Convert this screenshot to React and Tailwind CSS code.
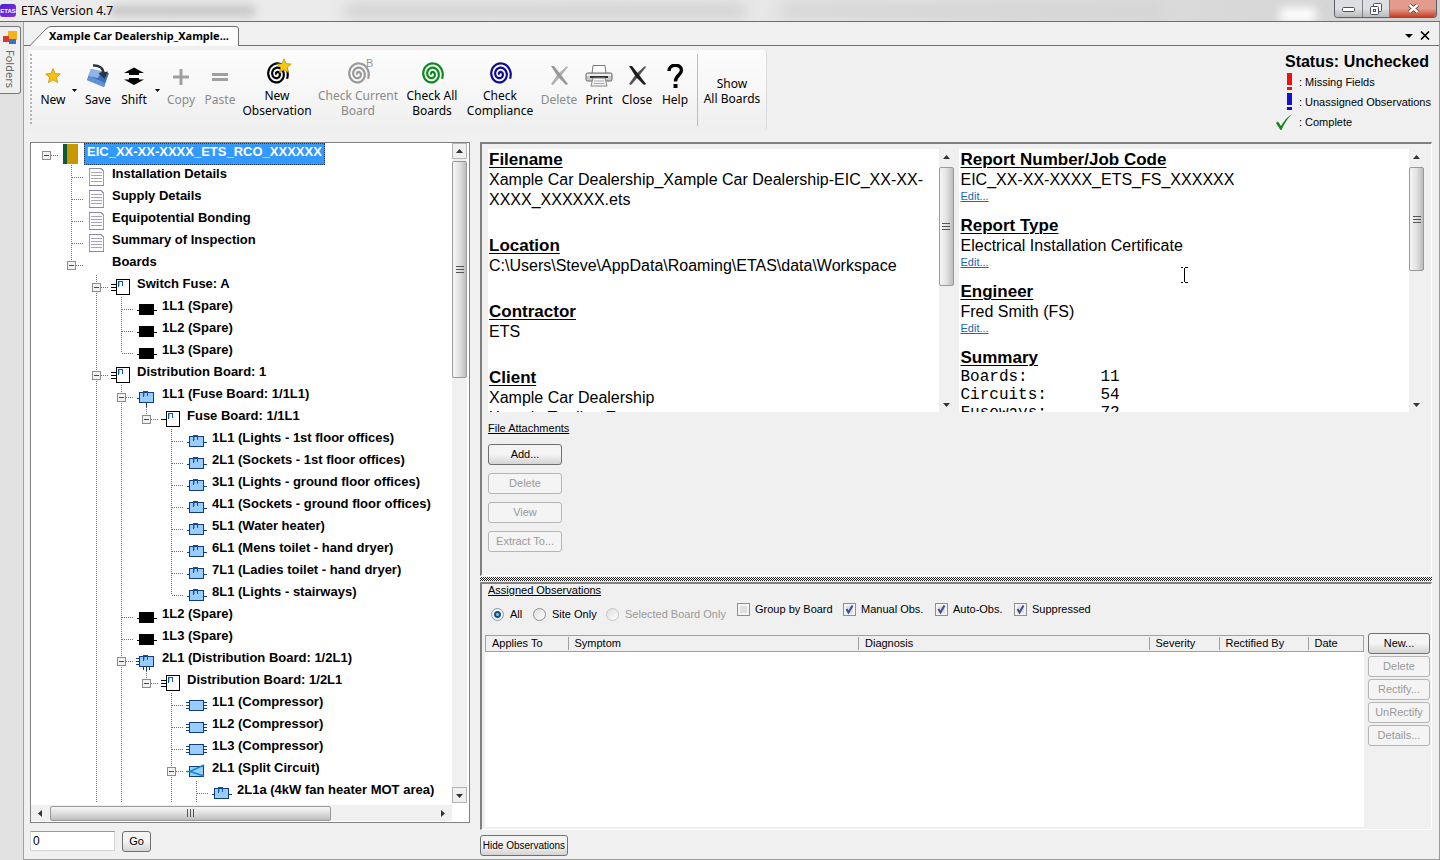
import React, { useState } from 'react';
import clsx from 'clsx';

const circuits = [
  '1L1 (Lights - 1st floor offices)',
  '2L1 (Sockets - 1st floor offices)',
  '3L1 (Lights - ground floor offices)',
  '4L1 (Sockets - ground floor offices)',
  '5L1 (Water heater)',
  '6L1 (Mens toilet - hand dryer)',
  '7L1 (Ladies toilet - hand dryer)',
  '8L1 (Lights - stairways)',
];

// "more" marks a node whose next sibling is further down than the view
const tree = {
  label: 'EIC_XX-XX-XXXX_ETS_RCO_XXXXXX',
  icon: 'book',
  children: [
    { label: 'Installation Details', icon: 'doc' },
    { label: 'Supply Details', icon: 'doc' },
    { label: 'Equipotential Bonding', icon: 'doc' },
    { label: 'Summary of Inspection', icon: 'doc' },
    {
      label: 'Boards',
      children: [
        {
          label: 'Switch Fuse: A',
          icon: 'board3',
          children: [
            { label: '1L1 (Spare)', icon: 'spare' },
            { label: '1L2 (Spare)', icon: 'spare' },
            { label: '1L3 (Spare)', icon: 'spare' },
          ],
        },
        {
          label: 'Distribution Board: 1',
          icon: 'board3',
          more: true,
          children: [
            {
              label: '1L1 (Fuse Board: 1/1L1)',
              icon: 'feed1',
              children: [
                {
                  label: 'Fuse Board: 1/1L1',
                  icon: 'board1',
                  children: circuits.map((label) => ({ label, icon: 'circuit' })),
                },
              ],
            },
            { label: '1L2 (Spare)', icon: 'spare' },
            { label: '1L3 (Spare)', icon: 'spare' },
            {
              label: '2L1 (Distribution Board: 1/2L1)',
              icon: 'feed3',
              more: true,
              children: [
                {
                  label: 'Distribution Board: 1/2L1',
                  icon: 'board3',
                  children: [
                    { label: '1L1 (Compressor)', icon: 'circuit3' },
                    { label: '1L2 (Compressor)', icon: 'circuit3' },
                    { label: '1L3 (Compressor)', icon: 'circuit3' },
                    {
                      label: '2L1 (Split Circuit)',
                      icon: 'split',
                      more: true,
                      children: [{ label: '2L1a (4kW fan heater MOT area)', icon: 'circuit', more: true }],
                    },
                  ],
                },
              ],
            },
          ],
        },
      ],
    },
  ],
};

function flatten(node, level = 0, guides = [], last = true) {
  const open = !last || !!node.more;
  const row = { ...node, level, guides, open };
  const next = level === 0 ? [] : [...guides, open];
  const kids = node.children || [];
  return [row, ...kids.flatMap((kid, i) => flatten(kid, level + 1, next, i === kids.length - 1))];
}

const rows = flatten(tree);

function spiral() {
  const end = Math.PI * 6 + 0.5;
  const points = [];
  for (let t = 2; t <= end; t += 0.15) {
    const r = 12 - ((end - t) / (Math.PI * 2)) * 4.3;
    if (r < 0.5) continue;
    points.push(`${(14 + r * Math.cos(t) * 0.92).toFixed(1)} ${(14 + r * Math.sin(t)).toFixed(1)}`);
  }
  return 'M' + points.join('L');
}

const SPIRAL = spiral();
const STAR = 'M0 -8L2.3 -2.6L8 -2.2L3.6 1.5L5 7.2L0 4.2L-5 7.2L-3.6 1.5L-8 -2.2L-2.3 -2.6Z';

function Lines({ ys, x1, x2, color = '#000' }) {
  return ys.map((y) => <path key={y} d={`M${x1} ${y + 0.5}H${x2}`} stroke={color} />);
}

function Pi({ x, y }) {
  return (
    <g fill="#0b55a8">
      <rect x={x} y={y} width="5" height="1" />
      <rect x={x} y={y} width="1" height="6" />
      <rect x={x + 1} y={y} width="1" height="5" opacity=".35" />
      <rect x={x + 4} y={y} width="1" height="5" />
    </g>
  );
}

function NodeIcon({ type }) {
  const navy = '#123c7c';
  return (
    <svg width="25" height="22" className="shrink-0" shapeRendering="crispEdges" aria-hidden="true">
      {type === 'book' && (
        <>
          <rect x="4" y="1" width="15" height="20" fill="#c99700" />
          <rect x="4" y="1" width="4" height="20" fill="#0b5a34" />
        </>
      )}
      {type === 'doc' && (
        <>
          <path d="M5.5 3.5H17L19.5 6V20.5H5.5Z" fill="#fdfdff" stroke="#9a9abd" />
          <path d="M5 20.5H20M5 3.5H17" stroke="#8888ac" />
          <Lines ys={[7, 10, 13, 16]} x1={7} x2={18} color="#a5a5b2" />
        </>
      )}
      {(type === 'board3' || type === 'board1') && (
        <>
          <Lines ys={type === 'board3' ? [9, 12, 15] : [12]} x1={2} x2={7} />
          <rect x="7.5" y="4.5" width="13" height="15" fill="#fff" stroke="#000" />
          <Pi x={9} y={6} />
        </>
      )}
      {type === 'spare' && (
        <>
          <Lines ys={[13]} x1={3} x2={23} />
          <rect x="5" y="7" width="15" height="11" fill="#000" />
        </>
      )}
      {['circuit', 'circuit3', 'feed1', 'feed3', 'split'].includes(type) && (
        <>
          {(type === 'circuit3' || type === 'feed3') && <Lines ys={[9, 12, 15]} x1={2} x2={5} color={navy} />}
          {type === 'circuit3' && <Lines ys={[9, 12, 15]} x1={20} x2={23} color={navy} />}
          {(type === 'circuit' || type === 'feed1') && <Lines ys={[13]} x1={3} x2={5} color={navy} />}
          {type === 'circuit' && <Lines ys={[13]} x1={20} x2={23} color={navy} />}
          {type === 'feed1' && <path d="M12.5 18V22" stroke={navy} />}
          {type === 'feed3' && <path d="M9.5 18V21M12.5 18V22M15.5 18V21" stroke={navy} />}
          <rect x="5.5" y="7.5" width="14" height="10" fill="#99ccff" stroke={navy} />
          {(type === 'circuit' || type === 'feed1' || type === 'feed3') && <Pi x={9} y={6} />}
          {type === 'split' && (
            <path d="M2 12.5H6L20 6M6 12.5L20 17" stroke="#0d8cc4" strokeWidth="1.5" fill="none" shapeRendering="auto" />
          )}
        </>
      )}
    </svg>
  );
}

function Guide({ up, down, across, box }) {
  return (
    <svg width="25" height="22" className="shrink-0" shapeRendering="crispEdges" aria-hidden="true">
      <g stroke="#707070" strokeDasharray="1 1">
        {up && <path d="M12.5 0V12" />}
        {down && <path d="M12.5 12V22" />}
        {across && <path d="M13 12.5H25" />}
      </g>
      {box && (
        <>
          <rect x="8.5" y="8.5" width="8" height="8" rx="1" fill="#f2f2f2" stroke="#8c8c8c" />
          <path d="M10 12.5H15" stroke="#35478a" />
        </>
      )}
    </svg>
  );
}

function TreeRow({ row }) {
  const [selected] = useState(row.level === 0);
  return (
    <li className="flex h-[22px]">
      {row.level > 0 && <Guide />}
      {row.guides.map((on, i) => (
        <Guide key={i} up={on} down={on} />
      ))}
      <Guide up={row.level > 0} down={row.level > 0 && row.open} across box={!!row.children} />
      <NodeIcon type={row.icon} />
      <span
        className={clsx(
          'whitespace-nowrap px-[3px] pt-px text-[13px] font-bold leading-4',
          selected && 'bg-[#3399ff] text-white outline-1 -outline-offset-1 outline-dotted outline-[#1a3c66]'
        )}
      >
        {row.label}
      </span>
    </li>
  );
}

function Arrow({ dir }) {
  const paths = { up: 'M1 6L4.5 2L8 6Z', down: 'M1 3L4.5 7L8 3Z', left: 'M6 1L2 4.5L6 8Z', right: 'M3 1L7 4.5L3 8Z' };
  return (
    <svg width="9" height="9" aria-hidden="true">
      <path d={paths[dir]} fill="#333" />
    </svg>
  );
}

function VScroll({ thumb, boxed }) {
  const end = clsx('flex h-4 w-full shrink-0 items-center justify-center', boxed && 'border border-[#b4b4b4] bg-[#efefef]');
  return (
    <div className="flex w-[15px] shrink-0 flex-col bg-[#f0f0f0]">
      <div className={end}><Arrow dir="up" /></div>
      <div className={clsx('mt-[2px] flex flex-col items-center justify-center gap-[2px] rounded-xs border border-[#999] bg-linear-to-r from-[#f6f6f6] via-[#e2e2e2] to-[#bcbcbc]', thumb)}>
        <span className="h-px w-2 bg-[#555]" />
        <span className="h-px w-2 bg-[#555]" />
        <span className="h-px w-2 bg-[#555]" />
      </div>
      <div className={clsx(end, 'mt-auto')}><Arrow dir="down" /></div>
    </div>
  );
}

function HScroll() {
  return (
    <div className="mt-[2px] mr-[17px] mb-px flex h-4 shrink-0 items-center bg-[#f0f0f0]">
      <div className="flex w-[19px] justify-center"><Arrow dir="left" /></div>
      <div className="flex h-[15px] w-[281px] items-center justify-center gap-[2px] rounded-xs border border-[#999] bg-linear-to-b from-[#f6f6f6] via-[#dedede] to-[#bcbcbc]">
        <span className="h-2 w-px bg-[#555]" />
        <span className="h-2 w-px bg-[#555]" />
        <span className="h-2 w-px bg-[#555]" />
      </div>
      <div className="ml-auto flex w-[19px] justify-center"><Arrow dir="right" /></div>
    </div>
  );
}

function Button({ className, small, children, ...props }) {
  return (
    <button
      className={clsx(
        'h-[21px] whitespace-nowrap rounded-[3px] border border-[#707070] bg-linear-to-b from-[#f4f4f4] from-50% to-[#d4d4d4] leading-[17px] text-black',
        'disabled:border-[#b5b5b5] disabled:from-[#f4f4f4] disabled:to-[#f4f4f4] disabled:text-[#9a9a9a]',
        small ? 'text-[10px]' : 'text-[11px]',
        className
      )}
      {...props}
    >
      {children}
    </button>
  );
}

function Spiral({ color, star, letter }) {
  return (
    <svg width="32" height="28" aria-hidden="true" className="overflow-visible">
      <path d={SPIRAL} transform="translate(2 1)" fill="none" stroke={color} strokeWidth="2.2" />
      {star && <path d={STAR} transform="translate(23 7) scale(.9)" fill="#f7c910" stroke="#b98700" strokeWidth=".8" />}
      {letter && <text x="24" y="8" fontSize="11" fill="#999" fontFamily="Liberation Sans, sans-serif">{letter}</text>}
    </svg>
  );
}

function ToolIcon({ type }) {
  return (
    <svg width="28" height="24" viewBox="0 0 28 24" aria-hidden="true">
      {type === 'new' && <path d={STAR} transform="translate(14 12) scale(.92)" fill="#f5c211" stroke="#c08a00" strokeWidth=".8" />}
      {type === 'save' && (
        <>
          <path d="M7 5L25 9L20 23L3 16Z" fill="#3c72bd" />
          <path d="M7 5L17 7L14 14L4 12Z" fill="#8fb6e8" />
          <path d="M3 16L20 23L21 19L5 12Z" fill="#5f92d6" />
          <path d="M9 1.500C15 1 19 4 19.500 9" fill="none" stroke="#2b3440" strokeWidth="2.600" />
          <path d="M14.500 9L24 7.500L20.500 15Z" fill="#2b3440" />
        </>
      )}
      {type === 'shift' && (
        <>
          <path d="M14 3.500L24 9H19V11H9V9H4Z" />
          <path d="M14 21L24 15.500H19V14H9V15.500H4Z" />
        </>
      )}
      {type === 'copy' && <path d="M14 5V21M6 13H22" stroke="#a0a0a0" strokeWidth="3" />}
      {type === 'paste' && <path d="M6 10.500H22M6 15.500H22" stroke="#a0a0a0" strokeWidth="3" />}
      {(type === 'delete' || type === 'close') && (
        <g fill={type === 'close' ? '#1c1c1c' : '#999'}>
          <path d="M6 2L9 2L15 9.500L23 20L21 21L13 13Z" />
          <path d="M22 2L23 3L16 12L8 21L6 20L13 10Z" opacity=".75" />
        </g>
      )}
      {type === 'print' && (
        <>
          <path d="M8 1.500H20L21 10H7Z" fill="#fff" stroke="#777" />
          <rect x="1" y="9" width="26" height="8" rx="1.500" fill="#c9c9c9" stroke="#666" />
          <rect x="2" y="10" width="24" height="2" fill="#efefef" />
          <rect x="5" y="12" width="18" height="2" fill="#333" />
          <path d="M8 14H20L22 22H6Z" fill="#f5f5f5" stroke="#888" />
          <path d="M9 17H19M8.500 19.500H19.500" stroke="#aaa" />
        </>
      )}
      {type === 'help' && (
        <>
          <path d="M8 7C8 -0.500 20.500 -0.500 20.500 6C20.500 11 14.500 11 14.500 17.500" fill="none" stroke="#000" strokeWidth="3.400" />
          <rect x="12.500" y="20" width="4" height="4" />
        </>
      )}
    </svg>
  );
}

function Tool({ width, icon, lines, tall, disabled }) {
  return (
    <button
      disabled={disabled}
      className={clsx(
        'flex shrink-0 flex-col items-center self-start whitespace-nowrap text-xs leading-[15px] text-black disabled:text-[#8a8a8a]',
        tall ? 'gap-px pt-[9px]' : 'gap-1 pt-[14px]',
        width
      )}
    >
      {icon}
      <span>{lines[0]}{lines[1] && <><br />{lines[1]}</>}</span>
    </button>
  );
}

function DropArrow({ width }) {
  return (
    <button aria-label="More" className={clsx('flex shrink-0 justify-center self-start pt-[39px]', width)}>
      <svg width="5" height="3" aria-hidden="true"><path d="M0 0H5L2.500 3Z" /></svg>
    </button>
  );
}

function Toolbar() {
  return (
    <div className="flex h-[81px] rounded-r-sm border-r border-[#dcdcdc] bg-linear-to-b from-[#fcfcfc] via-[#f7f7f7] to-[#eeeeee] font-['Noto_Sans','Open_Sans',sans-serif]">
      <div className="mt-1 mr-[6px] ml-[2px] h-[72px] w-[2px] bg-[repeating-linear-gradient(to_bottom,#b5b5b5_0_2px,transparent_2px_4px)]" />
      <Tool width="w-[30px]" icon={<ToolIcon type="new" />} lines={['New']} />
      <DropArrow width="w-[12px]" />
      <Tool width="w-[36px]" icon={<ToolIcon type="save" />} lines={['Save']} />
      <Tool width="w-[36px]" icon={<ToolIcon type="shift" />} lines={['Shift']} />
      <DropArrow width="w-[10px]" />
      <Tool width="w-[38px]" icon={<ToolIcon type="copy" />} lines={['Copy']} disabled />
      <Tool width="w-[40px]" icon={<ToolIcon type="paste" />} lines={['Paste']} disabled />
      <Tool width="w-[74px]" tall icon={<Spiral color="#000" star />} lines={['New', 'Observation']} />
      <Tool width="w-[88px]" tall icon={<Spiral color="#999" letter="B" />} lines={['Check Current', 'Board']} disabled />
      <Tool width="w-[60px]" tall icon={<Spiral color="#0a8a1c" />} lines={['Check All', 'Boards']} />
      <Tool width="w-[76px]" tall icon={<Spiral color="#0a0a96" />} lines={['Check', 'Compliance']} />
      <Tool width="w-[42px]" icon={<ToolIcon type="delete" />} lines={['Delete']} disabled />
      <Tool width="w-[38px]" icon={<ToolIcon type="print" />} lines={['Print']} />
      <Tool width="w-[38px]" icon={<ToolIcon type="close" />} lines={['Close']} />
      <Tool width="w-[38px]" icon={<ToolIcon type="help" />} lines={['Help']} />
      <div className="mt-1 ml-[3px] h-[72px] w-px bg-[#bdbdbd]" />
      <button className="w-[68px] text-xs leading-[15px] whitespace-nowrap">Show<br />All Boards</button>
    </div>
  );
}

function Bang({ color }) {
  return (
    <svg width="24" height="18" aria-hidden="true">
      <path d="M12 0H17V12H12ZM12 14H17V17H12Z" fill={color} />
    </svg>
  );
}

function Status() {
  return (
    <div className="ml-auto pt-[2px] pr-2 text-[11px]">
      <h1 className="pr-[2px] text-right text-[16px] leading-5 font-bold">Status: Unchecked</h1>
      <ul>
        <li className="flex h-5 items-center"><Bang color="#f01010" />: Missing Fields</li>
        <li className="flex h-5 items-center"><Bang color="#1010d0" />: Unassigned Observations</li>
        <li className="flex h-5 items-center">
          <svg width="24" height="18" aria-hidden="true">
            <path d="M1 10L3 8.500L6 13C9 8 12 4 17 1C12 6 9 11 6.500 17H5.500Z" fill="#12851f" />
          </svg>
          : Complete
        </li>
      </ul>
    </div>
  );
}

function Heading({ children }) {
  return <h2 className="text-[17px] leading-5 font-bold underline decoration-1 underline-offset-2">{children}</h2>;
}

const fileInfo = [
  ['Filename', ['Xample Car Dealership_Xample Car Dealership-EIC_XX-XX-XXXX_XXXXXX.ets']],
  ['Location', ['C:\\Users\\Steve\\AppData\\Roaming\\ETAS\\data\\Workspace']],
  ['Contractor', ['ETS']],
  ['Client', ['Xample Car Dealership', 'Xample Trading Estate']],
];

const reportInfo = [
  ['Report Number/Job Code', 'EIC_XX-XX-XXXX_ETS_FS_XXXXXX'],
  ['Report Type', 'Electrical Installation Certificate'],
  ['Engineer', 'Fred Smith (FS)'],
];

const summary = [['Boards:', 11], ['Circuits:', 54], ['Fuseways:', 72]];

function Details() {
  return (
    <div className="grid h-[263px] grid-cols-2 gap-[5px] text-[16px] leading-5">
      <div className="flex min-w-0 overflow-hidden">
        <div className="flex min-w-0 flex-1 flex-col gap-[26px] bg-white px-px pt-px">
          {fileInfo.map(([title, lines]) => (
            <section key={title}>
              <Heading>{title}</Heading>
              {lines.map((line) => <p key={line}>{line}</p>)}
            </section>
          ))}
        </div>
        <VScroll thumb="h-[119px]" />
      </div>
      <div className="relative flex min-w-0 overflow-hidden">
        <div className="flex min-w-0 flex-1 flex-col gap-[10px] bg-white px-[2px] pt-px">
          {reportInfo.map(([title, value]) => (
            <section key={title}>
              <Heading>{title}</Heading>
              <p>{value}</p>
              <a href="#edit" className="mb-[3px] block text-[11px] leading-[13px] text-[#1a66b8] underline">Edit...</a>
            </section>
          ))}
          <section>
            <Heading>Summary</Heading>
            <dl className="grid grid-cols-[140px_1fr] font-['Liberation_Mono',monospace] text-[16px] leading-[18px]">
              {summary.map(([name, count]) => (
                <React.Fragment key={name}>
                  <dt>{name}</dt>
                  <dd>{count}</dd>
                </React.Fragment>
              ))}
            </dl>
          </section>
        </div>
        <VScroll thumb="h-[104px]" />
        <svg width="8" height="16" className="absolute top-[118px] left-[221px]" shapeRendering="crispEdges" aria-hidden="true">
          <path d="M0.500 0.500H3M5 0.500H7.500M0.500 15.500H3M5 15.500H7.500M4 1V15" stroke="#000" />
        </svg>
      </div>
    </div>
  );
}

function Radio({ label, width, ...props }) {
  return (
    <label className={clsx('flex items-center gap-[6px] leading-4 whitespace-nowrap has-disabled:text-[#9a9a9a]', width)}>
      <input
        type="radio"
        name="scope"
        className="size-[13px] shrink-0 appearance-none rounded-full border border-[#8e8f8f] bg-linear-to-br from-[#ddd] to-white checked:border-[#8a9aa8] checked:bg-[radial-gradient(circle,#6cc4ea_0_1px,#1b4f80_2px_3px,#f0f4f7_4px)] disabled:border-[#c4c4c4]"
        {...props}
      />
      {label}
    </label>
  );
}

function Check({ label, width, ...props }) {
  return (
    <label className={clsx('flex items-center gap-[5px] leading-4 whitespace-nowrap', width)}>
      <span className="grid shrink-0 place-items-center">
        <input
          type="checkbox"
          className="peer col-start-1 row-start-1 size-[13px] appearance-none border border-[#8e8f8f] bg-[#dfdfe3] shadow-[inset_0_0_0_2px_#f4f4f4]"
          {...props}
        />
        <svg width="11" height="11" className="pointer-events-none col-start-1 row-start-1 hidden peer-checked:block" aria-hidden="true">
          <path d="M2.500 5L4.500 8.500L8.500 1.500" fill="none" stroke="#3c4f94" strokeWidth="2" />
        </svg>
      </span>
      {label}
    </label>
  );
}

function Th({ children, width, first }) {
  return (
    <th className={clsx('p-0 text-left font-normal', width)}>
      <div className={clsx('my-[1px] h-[13px] pl-[6px] leading-[13px]', !first && 'border-l border-[#a0a0a0]')}>{children}</div>
    </th>
  );
}

function Observations() {
  return (
    <section className="flex min-h-0 flex-1 flex-col border-t-2 border-r border-b border-l-2 border-t-[#808080] border-r-white border-b-white border-l-[#808080] pb-[2px] text-[11px]">
      <h2 className="pl-[6px] leading-3 underline">Assigned Observations</h2>
      <div className="flex h-[37px] items-start pl-[9px]">
        <div className="flex pt-[10px]">
          <Radio label="All" width="w-[42px]" defaultChecked />
          <Radio label="Site Only" width="w-[73px]" />
          <Radio label="Selected Board Only" width="w-[131px]" disabled />
        </div>
        <div className="flex pt-[5px]">
          <Check label="Group by Board" width="w-[106px]" />
          <Check label="Manual Obs." width="w-[92px]" defaultChecked />
          <Check label="Auto-Obs." width="w-[79px]" defaultChecked />
          <Check label="Suppressed" defaultChecked />
        </div>
      </div>
      <div className="flex min-h-0 flex-1 gap-1 pl-[3px]">
        <div className="mt-[2px] flex-1 bg-white">
          <table className="w-full table-fixed border-collapse border border-[#a0a0a0] bg-[#f0f0f0]">
            <thead>
              <tr>
                <Th width="w-[82px]" first>Applies To</Th>
                <Th>Symptom</Th>
                <Th>Diagnosis</Th>
                <Th width="w-[70px]">Severity</Th>
                <Th width="w-[89px]">Rectified By</Th>
                <Th width="w-[56px]">Date</Th>
              </tr>
            </thead>
          </table>
        </div>
        <div className="flex w-[63px] flex-col gap-[2px] pr-px">
          <Button>New...</Button>
          <Button disabled>Delete</Button>
          <Button disabled>Rectify...</Button>
          <Button disabled>UnRectify</Button>
          <Button disabled>Details...</Button>
        </div>
      </div>
    </section>
  );
}

function TitleBar() {
  return (
    <header className="relative flex h-[22px] shrink-0 items-center overflow-hidden border-b border-[#6e6e6e] bg-linear-to-r from-[#ececec] via-[#e9e9e9] to-[#d2d2d2] font-['Noto_Sans','Open_Sans',sans-serif] text-xs">
      <div className="absolute top-[6px] left-[110px] h-[10px] w-[145px] bg-[#c2c2c2] blur-[5px]" />
      <div className="absolute top-[4px] left-[345px] h-[14px] w-[400px] bg-[#d0d0d0] blur-[7px]" />
      <div className="absolute top-[4px] left-[780px] h-[14px] w-[380px] bg-[#d2d2d2] blur-[8px]" />
      <div className="absolute top-[8px] left-[1280px] h-[14px] w-[36px] bg-white blur-[5px]" />
      <span className="relative flex h-[13px] w-4 items-center justify-center overflow-hidden rounded-[3px] bg-linear-to-br from-[#4a1fd0] to-[#8a2be2] font-['Liberation_Sans',sans-serif] text-[6px] font-bold text-white">ETAS</span>
      <span className="relative ml-[5px]">ETAS Version 4.7</span>
      <div className="relative mr-[3px] ml-auto flex h-[18px] self-start overflow-hidden rounded-b-[4px] border border-t-0 border-[#5a5f6a]">
        <button aria-label="Minimize" className="flex w-7 items-center justify-center border-r border-[#7c7f88] bg-linear-to-b from-[#dedfe2] from-50% to-[#b9bbc0]">
          <svg width="13" height="6"><rect x=".5" y="1.500" width="12" height="4" rx="1" fill="#fff" stroke="#4c5060" /></svg>
        </button>
        <button aria-label="Restore" className="flex w-[27px] items-center justify-center border-r border-[#7c7f88] bg-linear-to-b from-[#dedfe2] from-50% to-[#b9bbc0]">
          <svg width="12" height="12" fill="#fff" stroke="#4c5060">
            <rect x="3.500" y=".5" width="8" height="8" rx="1" />
            <rect x=".5" y="3.500" width="8" height="8" rx="1" />
            <rect x="3.500" y="6.500" width="2" height="2" />
          </svg>
        </button>
        <button aria-label="Close window" className="flex w-[46px] items-center justify-center bg-linear-to-b from-[#e29b8c] from-50% to-[#c43d22]">
          <svg width="13" height="11">
            <path d="M2.500 2L10.500 9M10.500 2L2.500 9" stroke="#50343a" strokeWidth="4" />
            <path d="M2.500 2L10.500 9M10.500 2L2.500 9" stroke="#fff" strokeWidth="2.400" />
          </svg>
        </button>
      </div>
    </header>
  );
}

function FoldersTab() {
  return (
    <aside className="w-6 shrink-0 border-r border-[#a3a3a3] bg-[#e2e2e2] pt-[4px]">
      <button className="flex h-[68px] w-[21px] flex-col items-center gap-[5px] rounded-r-[3px] border border-l-0 border-[#7a7a7a] bg-[#efefef] pt-[4px] font-['Noto_Sans','Open_Sans',sans-serif] text-[11px] text-[#666]">
        <svg width="14" height="14" aria-hidden="true" className="shrink-0">
          <rect x="5" y="0" width="9" height="9" fill="#f2b21b" />
          <rect x="0" y="5" width="6" height="6" fill="#d33c2c" />
          <rect x="6" y="8" width="7" height="5" fill="#3a6fd0" />
        </svg>
        <span className="leading-3 [writing-mode:vertical-rl]">Folders</span>
      </button>
    </aside>
  );
}

function DocumentTabs() {
  return (
    <nav className="flex h-6 shrink-0 items-end pr-[6px] shadow-[inset_0_-1px_0_#707070]">
      <button className="relative ml-[6px] h-5 w-[209px] pl-[19px] text-left font-['Noto_Sans','Open_Sans',sans-serif] text-[11px] font-bold whitespace-nowrap">
        <svg width="209" height="20" className="absolute inset-0" aria-hidden="true">
          <path d="M0 19.500L16 3Q18.500 .5 21 .5H206Q208.500 .5 208.500 3V20" fill="#fcfcfc" stroke="#707070" />
          <path d="M1 19.500H208" stroke="#fcfcfc" />
        </svg>
        <span className="relative">Xample Car Dealership_Xample...</span>
      </button>
      <div className="mb-[6px] ml-auto flex items-center gap-[7px] pr-[3px]">
        <button aria-label="Tab list"><svg width="8" height="4" className="block"><path d="M0 0H8L4 4Z" /></svg></button>
        <button aria-label="Close tab">
          <svg width="10" height="9" className="block"><path d="M1 .5L9 8.500M9 .5L1 8.500" stroke="#000" strokeWidth="1.600" /></svg>
        </button>
      </div>
    </nav>
  );
}

export default function App() {
  return (
    <div className="flex h-screen flex-col overflow-hidden bg-[#f0f0f0] font-['Liberation_Sans',Arial,sans-serif] text-black">
      <TitleBar />
      <div className="flex min-h-0 flex-1">
        <FoldersTab />
        <main className="flex min-w-0 flex-1 flex-col border-r border-b border-[#9a9a9a]">
          <DocumentTabs />
          <div className="mt-1 flex shrink-0 pl-1">
            <Toolbar />
            <Status />
          </div>
          <div className="mt-[10px] -mb-px flex min-h-0 flex-1 pr-[7px] pl-[6px]">
            <div className="flex w-[440px] shrink-0 flex-col">
              <div className="flex min-h-0 flex-1 flex-col border border-[#828282] bg-white">
                <div className="flex min-h-0 flex-1 pr-[2px]">
                  <ul className="min-w-0 flex-1 overflow-hidden pl-[3px]">
                    {rows.map((row, i) => <TreeRow key={i} row={row} />)}
                  </ul>
                  <VScroll thumb="h-[217px]" boxed />
                </div>
                <HScroll />
              </div>
              <form className="flex h-[37px] items-start gap-[7px] pt-2" onSubmit={(e) => e.preventDefault()}>
                <input aria-label="Go to" defaultValue="0" className="h-5 w-[85px] border border-[#d5d5d5] border-t-[#9a9a9a] bg-white px-[2px] text-xs" />
                <Button className="w-[29px]">Go</Button>
              </form>
            </div>
            <div className="ml-[10px] flex min-w-0 flex-1 flex-col">
              <section className="h-[434px] shrink-0 border-t-2 border-r border-b border-l-2 border-t-[#808080] border-r-white border-b-white border-l-[#808080] pt-[5px] pr-[7px] pl-[6px]">
                <Details />
                <h2 className="mt-2 text-[11px] leading-4 underline">File Attachments</h2>
                <div className="mt-2 flex w-[74px] flex-col gap-2">
                  <Button>Add...</Button>
                  <Button disabled>Delete</Button>
                  <Button disabled>View</Button>
                  <Button disabled>Extract To...</Button>
                </div>
              </section>
              <div className="my-px h-1 shrink-0 bg-[repeating-conic-gradient(#222_0_25%,#fff_0_50%)] bg-[length:2px_2px]" />
              <Observations />
              <div className="flex h-[30px] shrink-0 items-start pt-[5px]">
                <Button small className="w-[88px]">Hide Observations</Button>
              </div>
            </div>
          </div>
        </main>
      </div>
    </div>
  );
}
